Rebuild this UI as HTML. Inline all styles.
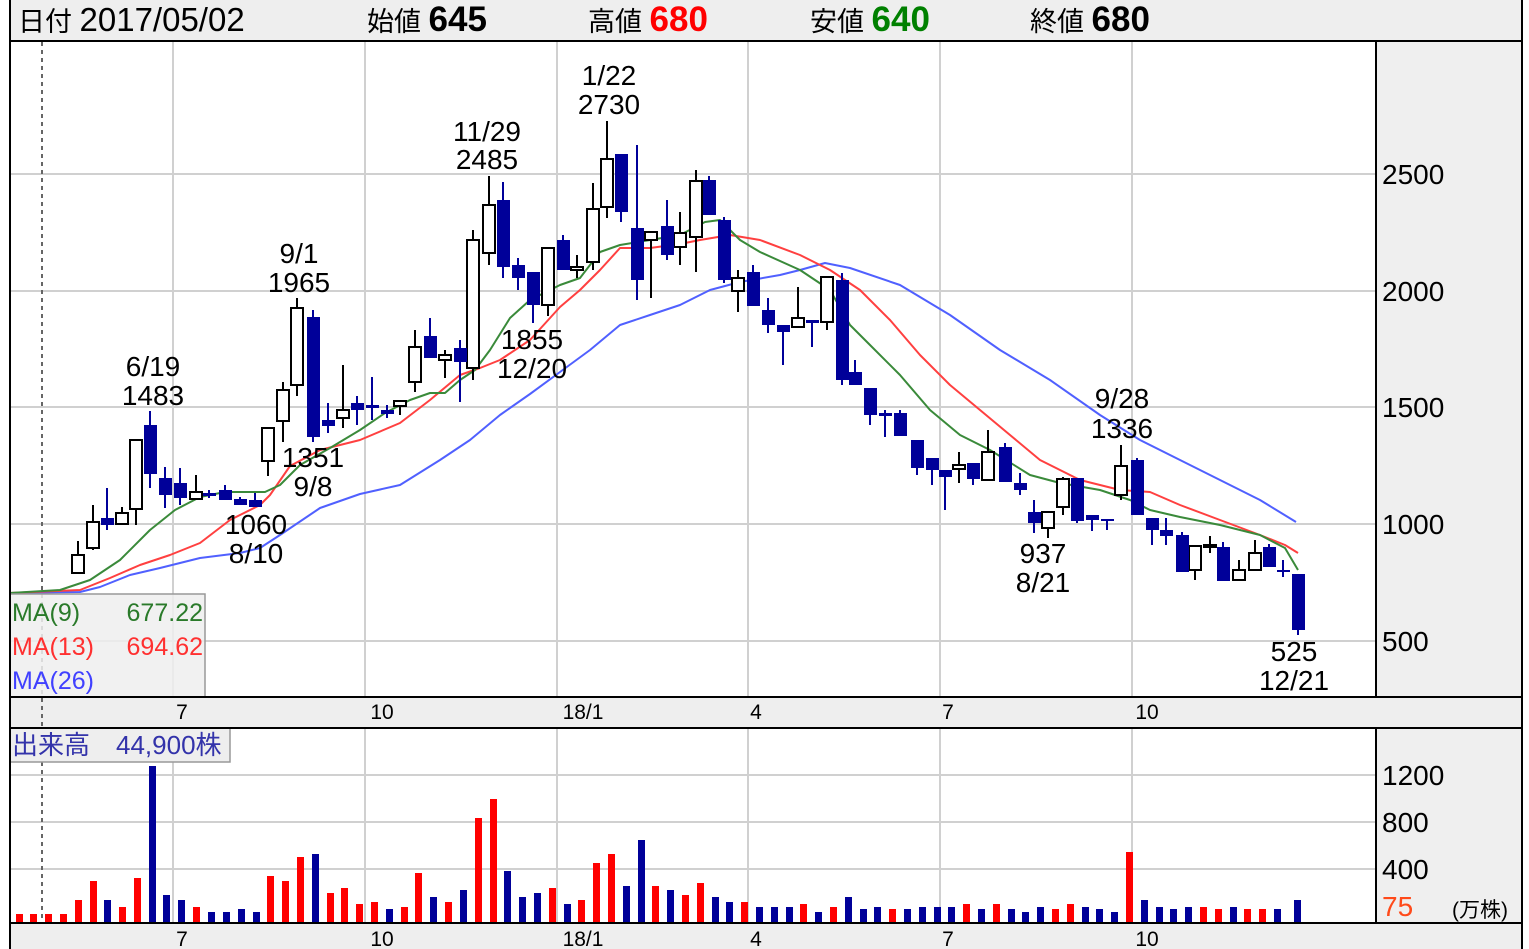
<!DOCTYPE html>
<html><head><meta charset="utf-8"><style>
body{margin:0;background:#fff;width:1529px;height:949px;overflow:hidden}
svg{display:block;font-family:"Liberation Sans","Noto Sans CJK JP",sans-serif}
</style></head><body>
<svg width="1529" height="949" viewBox="0 0 1529 949">
<rect x="0" y="0" width="1529" height="949" fill="#fff"/>
<rect x="10" y="0" width="1512" height="41" fill="#eeeeee"/>
<rect x="1377" y="42" width="145" height="655" fill="#efefef"/>
<rect x="1377" y="728" width="145" height="195" fill="#efefef"/>
<rect x="10" y="697" width="1512" height="31" fill="#eeeeee"/>
<rect x="10" y="923" width="1512" height="26" fill="#eeeeee"/>
<g stroke="#d0d0d0" stroke-width="2">
<path d="M11 174H1376M11 291H1376M11 407H1376M11 524H1376M11 641H1376"/>
<path d="M11 775H1376M11 822H1376M11 869H1376"/>
<path d="M173 42V697M365 42V697M557 42V697M748 42V697M940 42V697M1132 42V697"/>
<path d="M173 728V923M365 728V923M557 728V923M748 728V923M940 728V923M1132 728V923"/>
</g>
<path d="M42 42V923" stroke="#666" stroke-width="2" stroke-dasharray="4,4"/>
<g fill="none" stroke-width="2" stroke-linejoin="round">
<polyline stroke="#5060ff" points="10,593 80,592 100,587 130,575 160,568 200,558 240,553 260,548 280,535 320,508 360,494 400,485 440,460 470,440 500,415 530,394 560,372 590,350 620,325 650,315 680,305 710,290 740,282 780,275 800,270 825,263 850,268 900,285 950,315 1000,350 1050,380 1100,415 1140,440 1180,460 1220,480 1260,500 1296,522"/>
<polyline stroke="#ff4040" points="10,593 80,590 110,578 140,565 170,555 200,543 230,520 260,505 270,495 290,466 320,450 360,440 400,423 430,400 460,375 480,368 500,360 530,340 560,307 580,290 600,270 620,248 650,248 680,244 700,240 730,235 760,240 800,255 830,270 860,290 890,320 920,355 950,385 980,410 1010,435 1040,460 1080,480 1120,490 1150,492 1180,505 1220,520 1260,535 1285,545 1298,553"/>
<polyline stroke="#3a8a3a" points="10,593 60,590 90,580 120,560 150,530 175,510 200,497 225,492 265,492 280,485 300,465 330,448 360,430 385,413 410,400 430,393 445,393 460,380 475,370 490,350 510,318 530,300 560,285 580,278 600,252 620,245 650,240 680,235 705,222 720,220 740,240 760,252 800,270 830,290 850,325 870,345 900,375 930,410 960,435 990,450 1030,475 1060,483 1100,490 1130,500 1150,510 1180,517 1220,525 1260,535 1285,548 1298,570"/>
</g>
<g stroke="#000" stroke-width="2" fill="none">
<path d="M78 541V573M93 505V550M122 507V524M136 440V525M196 475V499M268 428V476M283 382V442M297 298V396M343 365V428M400 401V415M415 330V392M445 350V378M473 230V380M489 176V265M548 248V316M577 255V278M593 183V270M607 121V218M651 232V298M680 212V265M696 170V272M738 270V312M798 287V327M827 277V330M959 452V483M988 430V480M1048 512V538M1063 477V515M1121 445V500M1195 546V580M1210 536V553M1239 560V580M1255 540V570"/>
</g>
<g stroke="#000099" stroke-width="2" fill="none">
<path d="M107 488V530M150 411V488M165 467V508M180 468V505M209 490V498M225 485V500M240 497V505M255 493V507M313 310V442M328 403V433M357 396V425M372 377V420M387 405V418M430 318V358M460 340V402M503 182V278M518 258V290M533 272V323M563 235V270M621 154V222M637 145V300M667 200V260M709 176V215M724 217V283M753 265V306M768 298V333M783 325V365M812 320V347M842 273V385M855 360V385M870 388V425M885 410V437M900 410V436M917 440V475M932 458V485M945 470V510M973 463V485M1005 443V482M1020 473V495M1034 500V533M1077 478V523M1092 515V531M1107 519V530M1137 458V515M1152 518V545M1166 518V545M1182 532V572M1223 542V581M1269 544V567M1283 560V577M1298 574V635"/>
</g>
<g fill="#fff" stroke="#000" stroke-width="2">
<rect x="72" y="555" width="12" height="18"/><rect x="87" y="522" width="12" height="26"/><rect x="116" y="513" width="12" height="11"/><rect x="130" y="440" width="12" height="69"/><rect x="190" y="492" width="12" height="7"/><rect x="262" y="428" width="12" height="33"/><rect x="277" y="390" width="12" height="31"/><rect x="291" y="308" width="12" height="77"/><rect x="337" y="410" width="12" height="8"/><rect x="394" y="401" width="12" height="5"/><rect x="409" y="347" width="12" height="35"/><rect x="439" y="355" width="12" height="5"/><rect x="467" y="240" width="12" height="128"/><rect x="483" y="205" width="12" height="48"/><rect x="542" y="248" width="12" height="57"/><rect x="571" y="267" width="12" height="3"/><rect x="587" y="209" width="12" height="53"/><rect x="601" y="159" width="12" height="48"/><rect x="645" y="232" width="12" height="8"/><rect x="674" y="233" width="12" height="14"/><rect x="690" y="181" width="12" height="56"/><rect x="732" y="278" width="12" height="13"/><rect x="792" y="318" width="12" height="9"/><rect x="821" y="277" width="12" height="45"/><rect x="953" y="465" width="12" height="4"/><rect x="982" y="452" width="12" height="28"/><rect x="1042" y="512" width="12" height="16"/><rect x="1057" y="479" width="12" height="28"/><rect x="1115" y="466" width="12" height="29"/><rect x="1189" y="546" width="12" height="24"/><rect x="1204" y="545" width="12" height="2"/><rect x="1233" y="570" width="12" height="10"/><rect x="1249" y="553" width="12" height="17"/>
</g>
<g fill="#000099">
<rect x="101" y="518" width="13" height="7"/><rect x="144" y="425" width="13" height="49"/><rect x="159" y="478" width="13" height="17"/><rect x="174" y="483" width="13" height="15"/><rect x="203" y="493" width="13" height="3"/><rect x="219" y="490" width="13" height="10"/><rect x="234" y="499" width="13" height="6"/><rect x="249" y="500" width="13" height="7"/><rect x="307" y="317" width="13" height="120"/><rect x="322" y="420" width="13" height="6"/><rect x="351" y="403" width="13" height="7"/><rect x="366" y="405" width="13" height="3"/><rect x="381" y="410" width="13" height="4"/><rect x="424" y="336" width="13" height="22"/><rect x="454" y="348" width="13" height="14"/><rect x="497" y="200" width="13" height="67"/><rect x="512" y="265" width="13" height="13"/><rect x="527" y="272" width="13" height="33"/><rect x="557" y="240" width="13" height="30"/><rect x="615" y="154" width="13" height="58"/><rect x="631" y="228" width="13" height="52"/><rect x="661" y="226" width="13" height="29"/><rect x="703" y="180" width="13" height="35"/><rect x="718" y="220" width="13" height="60"/><rect x="747" y="272" width="13" height="34"/><rect x="762" y="310" width="13" height="15"/><rect x="777" y="325" width="13" height="7"/><rect x="806" y="320" width="13" height="3"/><rect x="836" y="280" width="13" height="100"/><rect x="849" y="372" width="13" height="13"/><rect x="864" y="388" width="13" height="27"/><rect x="879" y="413" width="13" height="3"/><rect x="894" y="413" width="13" height="23"/><rect x="911" y="440" width="13" height="28"/><rect x="926" y="458" width="13" height="12"/><rect x="939" y="470" width="13" height="7"/><rect x="967" y="463" width="13" height="16"/><rect x="999" y="447" width="13" height="35"/><rect x="1014" y="483" width="13" height="7"/><rect x="1028" y="512" width="13" height="11"/><rect x="1071" y="478" width="13" height="43"/><rect x="1086" y="515" width="13" height="5"/><rect x="1101" y="519" width="13" height="2"/><rect x="1131" y="460" width="13" height="55"/><rect x="1146" y="518" width="13" height="12"/><rect x="1160" y="530" width="13" height="6"/><rect x="1176" y="535" width="13" height="37"/><rect x="1217" y="547" width="13" height="34"/><rect x="1263" y="547" width="13" height="20"/><rect x="1277" y="570" width="13" height="2"/><rect x="1292" y="574" width="13" height="56"/>
</g>
<g font-size="28" fill="#000" text-anchor="middle">
<text x="153" y="376">6/19</text><text x="153" y="405">1483</text>
<text x="299" y="263">9/1</text><text x="299" y="292">1965</text>
<text x="313" y="467">1351</text><text x="313" y="496">9/8</text>
<text x="256" y="534">1060</text><text x="256" y="563">8/10</text>
<text x="487" y="141">11/29</text><text x="487" y="169">2485</text>
<text x="609" y="85">1/22</text><text x="609" y="114">2730</text>
<text x="532" y="349">1855</text><text x="532" y="378">12/20</text>
<text x="1122" y="408">9/28</text><text x="1122" y="438">1336</text>
<text x="1043" y="563">937</text><text x="1043" y="592">8/21</text>
<text x="1294" y="661">525</text><text x="1294" y="690">12/21</text>
</g>
<g font-size="28" fill="#000">
<text x="1382" y="184">2500</text><text x="1382" y="301">2000</text><text x="1382" y="417">1500</text><text x="1382" y="534">1000</text><text x="1382" y="651">500</text>
<text x="1382" y="785">1200</text><text x="1382" y="832">800</text><text x="1382" y="879">400</text>
<text x="1382" y="916" fill="#ff4a1a">75</text>
<text x="1452" y="917" font-size="21">(万株)</text>
</g>
<g font-size="21" fill="#000" text-anchor="middle">
<text x="182" y="719">7</text><text x="382" y="719">10</text><text x="583" y="719">18/1</text><text x="756" y="719">4</text><text x="948" y="719">7</text><text x="1147" y="719">10</text>
<text x="182" y="946">7</text><text x="382" y="946">10</text><text x="583" y="946">18/1</text><text x="756" y="946">4</text><text x="948" y="946">7</text><text x="1147" y="946">10</text>
</g>
<rect x="10" y="594" width="195" height="103" fill="#eeeeee" fill-opacity="0.85" stroke="#999" stroke-width="1.5"/>
<g font-size="25">
<text x="12" y="621" fill="#2a7a2a">MA(9)</text><text x="203" y="621" fill="#2a7a2a" text-anchor="end">677.22</text>
<text x="12" y="655" fill="#ff3030">MA(13)</text><text x="203" y="655" fill="#ff3030" text-anchor="end">694.62</text>
<text x="12" y="689" fill="#4040ff">MA(26)</text>
</g>
<rect x="10" y="728" width="220" height="34" fill="#eeeeee" stroke="#999" stroke-width="1.5"/>
<text x="12" y="754" font-size="26" fill="#3333aa">出来高　44,900株</text>
<g>
<rect x="16" y="914" width="7" height="9" fill="#f00"/><rect x="30" y="914" width="7" height="9" fill="#f00"/><rect x="45" y="914" width="7" height="9" fill="#f00"/><rect x="60" y="914" width="7" height="9" fill="#f00"/><rect x="75" y="900" width="7" height="23" fill="#f00"/><rect x="90" y="881" width="7" height="42" fill="#f00"/><rect x="104" y="900" width="7" height="23" fill="#009"/><rect x="119" y="907" width="7" height="16" fill="#f00"/><rect x="134" y="878" width="7" height="45" fill="#f00"/><rect x="149" y="766" width="7" height="157" fill="#009"/><rect x="163" y="895" width="7" height="28" fill="#009"/><rect x="178" y="900" width="7" height="23" fill="#009"/><rect x="193" y="907" width="7" height="16" fill="#f00"/><rect x="208" y="912" width="7" height="11" fill="#009"/><rect x="223" y="912" width="7" height="11" fill="#009"/><rect x="238" y="909" width="7" height="14" fill="#009"/><rect x="253" y="912" width="7" height="11" fill="#009"/><rect x="267" y="876" width="7" height="47" fill="#f00"/><rect x="282" y="881" width="7" height="42" fill="#f00"/><rect x="297" y="857" width="7" height="66" fill="#f00"/><rect x="312" y="854" width="7" height="69" fill="#009"/><rect x="327" y="893" width="7" height="30" fill="#f00"/><rect x="341" y="888" width="7" height="35" fill="#f00"/><rect x="356" y="904" width="7" height="19" fill="#f00"/><rect x="371" y="902" width="7" height="21" fill="#f00"/><rect x="386" y="909" width="7" height="14" fill="#009"/><rect x="401" y="907" width="7" height="16" fill="#f00"/><rect x="415" y="873" width="7" height="50" fill="#f00"/><rect x="430" y="897" width="7" height="26" fill="#009"/><rect x="445" y="902" width="7" height="21" fill="#f00"/><rect x="460" y="890" width="7" height="33" fill="#009"/><rect x="475" y="818" width="7" height="105" fill="#f00"/><rect x="490" y="799" width="7" height="124" fill="#f00"/><rect x="504" y="871" width="7" height="52" fill="#009"/><rect x="519" y="897" width="7" height="26" fill="#009"/><rect x="534" y="893" width="7" height="30" fill="#009"/><rect x="549" y="888" width="7" height="35" fill="#f00"/><rect x="564" y="904" width="7" height="19" fill="#009"/><rect x="578" y="900" width="7" height="23" fill="#f00"/><rect x="593" y="863" width="7" height="60" fill="#f00"/><rect x="608" y="854" width="7" height="69" fill="#f00"/><rect x="623" y="886" width="7" height="37" fill="#009"/><rect x="638" y="840" width="7" height="83" fill="#009"/><rect x="652" y="886" width="7" height="37" fill="#f00"/><rect x="667" y="890" width="7" height="33" fill="#009"/>
<rect x="682" y="895" width="7" height="28" fill="#f00"/><rect x="697" y="883" width="7" height="40" fill="#f00"/><rect x="712" y="897" width="7" height="26" fill="#009"/><rect x="726" y="902" width="7" height="21" fill="#009"/><rect x="741" y="902" width="7" height="21" fill="#f00"/><rect x="756" y="907" width="7" height="16" fill="#009"/><rect x="771" y="907" width="7" height="16" fill="#009"/><rect x="786" y="907" width="7" height="16" fill="#009"/><rect x="800" y="904" width="7" height="19" fill="#f00"/><rect x="815" y="912" width="7" height="11" fill="#009"/><rect x="830" y="907" width="7" height="16" fill="#f00"/><rect x="845" y="897" width="7" height="26" fill="#009"/><rect x="860" y="909" width="7" height="14" fill="#009"/><rect x="874" y="907" width="7" height="16" fill="#009"/><rect x="889" y="909" width="7" height="14" fill="#f00"/><rect x="904" y="909" width="7" height="14" fill="#009"/><rect x="919" y="907" width="7" height="16" fill="#009"/><rect x="934" y="907" width="7" height="16" fill="#009"/><rect x="948" y="907" width="7" height="16" fill="#009"/><rect x="963" y="904" width="7" height="19" fill="#f00"/><rect x="978" y="909" width="7" height="14" fill="#009"/><rect x="993" y="904" width="7" height="19" fill="#f00"/><rect x="1008" y="909" width="7" height="14" fill="#009"/><rect x="1022" y="912" width="7" height="11" fill="#009"/><rect x="1037" y="907" width="7" height="16" fill="#009"/><rect x="1052" y="909" width="7" height="14" fill="#f00"/><rect x="1067" y="904" width="7" height="19" fill="#f00"/><rect x="1082" y="907" width="7" height="16" fill="#009"/><rect x="1096" y="909" width="7" height="14" fill="#009"/><rect x="1111" y="912" width="7" height="11" fill="#009"/><rect x="1126" y="852" width="7" height="71" fill="#f00"/><rect x="1141" y="900" width="7" height="23" fill="#009"/><rect x="1156" y="907" width="7" height="16" fill="#009"/><rect x="1170" y="909" width="7" height="14" fill="#009"/><rect x="1185" y="907" width="7" height="16" fill="#009"/><rect x="1200" y="907" width="7" height="16" fill="#f00"/><rect x="1215" y="909" width="7" height="14" fill="#f00"/><rect x="1230" y="907" width="7" height="16" fill="#009"/><rect x="1244" y="909" width="7" height="14" fill="#f00"/><rect x="1259" y="909" width="7" height="14" fill="#f00"/><rect x="1274" y="909" width="7" height="14" fill="#009"/><rect x="1294" y="900" width="7" height="23" fill="#009"/>
</g>
<g stroke="#000" stroke-width="2" fill="none">
<path d="M10 0V949M1522 0V949"/>
<path d="M10 41H1522M10 697H1522M10 728H1522M10 923H1522"/>
<path d="M1376 42V697M1376 728V923"/>
</g>
<text x="18" y="31" font-size="27" fill="#000">日付 <tspan font-size="33">2017/05/02</tspan></text>
<text x="367" y="31" font-size="27" fill="#000">始値 <tspan font-size="35" font-weight="bold">645</tspan></text>
<text x="588" y="31" font-size="27" fill="#000">高値 <tspan font-size="35" font-weight="bold" fill="#ff0000">680</tspan></text>
<text x="810" y="31" font-size="27" fill="#000">安値 <tspan font-size="35" font-weight="bold" fill="#008000">640</tspan></text>
<text x="1030" y="31" font-size="27" fill="#000">終値 <tspan font-size="35" font-weight="bold">680</tspan></text>
</svg>
</body></html>
